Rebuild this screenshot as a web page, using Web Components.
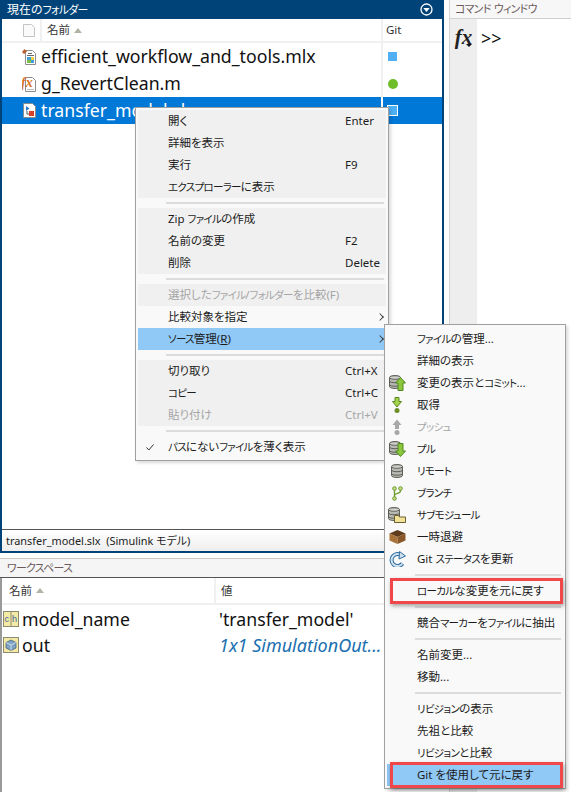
<!DOCTYPE html>
<html lang="ja">
<head>
<meta charset="utf-8">
<title>MATLAB</title>
<style>
html, body { margin: 0; padding: 0; height: 100%; background: #fff; overflow: hidden; }
body { font-family: "Noto Sans", "Noto Sans CJK JP", sans-serif; font-size: 11.5px; font-feature-settings: "palt"; color: #1c1c1c; }
.kana { font-size: 10.5px; letter-spacing: -.7px; }
</style>
</head>
<body>

<app-shell>
    <div slot="left">
        <folder-panel title-text="現在のフォルダー" status="transfer_model.slx  (Simulink モデル)">
            <file-row icon="mlx" git="added">efficient_workflow_and_tools.mlx</file-row>
            <file-row icon="m" git="clean">g_RevertClean.m</file-row>
            <file-row icon="slx" git="added" selected>transfer_model.slx</file-row>
        </folder-panel>
        <workspace-panel>
            <var-row icon="char" value="'transfer_model'">model_name</var-row>
            <var-row icon="cube" value="1x1 SimulationOut..." object>out</var-row>
        </workspace-panel>
    </div>
    <command-panel slot="right"></command-panel>
</app-shell>

<!-- メニュー -->
<context-menu left="135" top="107" width="254">
    <menu-item shade shortcut="Enter">開く</menu-item>
    <menu-item shade>詳細を表示</menu-item>
    <menu-item shade shortcut="F9">実行</menu-item>
    <menu-item shade>エクスプローラーに表示</menu-item>
    <menu-sep></menu-sep>
    <menu-item shade>Zip ファイルの作成</menu-item>
    <menu-item shade shortcut="F2">名前の変更</menu-item>
    <menu-item shade shortcut="Delete">削除</menu-item>
    <menu-sep></menu-sep>
    <menu-item shade disabled>選択したファイル/フォルダーを比較(F)</menu-item>
    <menu-item arrow>比較対象を指定</menu-item>
    <menu-item active arrow>ソース管理(<u>R</u>)</menu-item>
    <menu-sep></menu-sep>
    <menu-item shade shortcut="Ctrl+X">切り取り</menu-item>
    <menu-item shade shortcut="Ctrl+C">コピー</menu-item>
    <menu-item shade disabled shortcut="Ctrl+V">貼り付け</menu-item>
    <menu-sep></menu-sep>
    <menu-item checked>パスにないファイルを薄く表示</menu-item>
</context-menu>

<context-menu left="384" top="324" width="182" sub>
    <menu-item>ファイルの管理...</menu-item>
    <menu-item>詳細の表示</menu-item>
    <menu-item icon="dbup">変更の表示とコミット...</menu-item>
    <menu-item icon="fetch">取得</menu-item>
    <menu-item icon="push" disabled>プッシュ</menu-item>
    <menu-item icon="dbdown">プル</menu-item>
    <menu-item icon="db">リモート</menu-item>
    <menu-item icon="branch">ブランチ</menu-item>
    <menu-item icon="dbfolder">サブモジュール</menu-item>
    <menu-item icon="box">一時退避</menu-item>
    <menu-item icon="refresh">Git ステータスを更新</menu-item>
    <menu-sep></menu-sep>
    <menu-item callout>ローカルな変更を元に戻す</menu-item>
    <menu-sep></menu-sep>
    <menu-item>競合マーカーをファイルに抽出</menu-item>
    <menu-sep></menu-sep>
    <menu-item>名前変更...</menu-item>
    <menu-item>移動...</menu-item>
    <menu-sep></menu-sep>
    <menu-item>リビジョンの表示</menu-item>
    <menu-item>先祖と比較</menu-item>
    <menu-item>リビジョンと比較</menu-item>
    <menu-item active callout>Git を使用して元に戻す</menu-item>
</context-menu>

<script>
//カタカナは元の画面で幅が狭いので、連続部分を span で包む
const kanaStyle = `.kana { font-size: .91em; letter-spacing: -.7px; }`;
const kana = s => s.replace(/[ァ-ヶー]+/g, '<span class="kana">$&</span>');

//データベースの円柱は何度も使うので共通にする
const cyl = (x, y) => `<g transform="translate(${x} ${y})"><path d="M.5 2.500c0-2.600 11-2.600 11 0v9c0 2.600-11 2.600-11 0z" fill="#b9b9b4" stroke="#5e5e58"/><path d="M.5 2.500c0 2.300 11 2.300 11 0" fill="#e4e4e0" stroke="#5e5e58"/><path d="M.5 6c0 2.300 11 2.300 11 0M.5 9.500c0 2.300 11 2.300 11 0" fill="none" stroke="#5e5e58"/></g>`;

//アイコン
const icons = {
    mlx: `<svg width="14" height="16" viewBox="0 0 14 16"><path d="M3.500 1.500h7l3 3v11h-10z" fill="#fff" stroke="#8c8c8c"/><rect x="5" y="8" width="7" height="6" fill="#3f9fd8"/><rect x="5" y="11" width="4" height="3" fill="#7fbf3f"/><rect x="9" y="8" width="3" height="3" fill="#f2d04a"/><path d="M6 4.500h4M5 6.500h7" stroke="#666"/><path d="M0 3l2.500-3 2.500 2.500-3 2.500z" fill="#b8602c"/></svg>`,
    m: `<svg width="14" height="16" viewBox="0 0 14 16"><path d="M3.500 1.500h7l3 3v11h-10z" fill="#fff" stroke="#8c8c8c"/><path d="M5 13.500h7" stroke="#bbb"/><text x="-1" y="11" font-family="Liberation Serif" font-style="italic" font-weight="700" font-size="14" fill="#d9742b">fx</text></svg>`,
    slx: `<svg width="13" height="15" viewBox="0 0 13 15"><path d="M.5.5h9l3 3v11h-12z" fill="#fff" stroke="#8c8c8c"/><rect x="6" y="8" width="5" height="5" fill="#d8402a"/><path d="M3 3v5l3.500-2.500z" fill="#2a78c8"/><path d="M4 8v3h2" fill="none" stroke="#555"/></svg>`,
    doc: `<svg width="12" height="13" viewBox="0 0 12 13"><path d="M.5.5h8l3 3v9h-11z" fill="#fafafa" stroke="#c4c4c4"/></svg>`,
    char: `<svg width="16" height="16" viewBox="0 0 16 16"><rect x=".5" y=".5" width="15" height="15" fill="#f5e9a6" stroke="#8a8a70"/><path d="M8 1v14" stroke="#8a8a70"/><text x="1.500" y="11" font-family="Liberation Sans" font-size="9" fill="#3a5f9a">c</text><text x="9" y="11" font-family="Liberation Sans" font-size="9" fill="#3a5f9a">h</text></svg>`,
    cube: `<svg width="16" height="16" viewBox="0 0 16 16"><rect x=".5" y=".5" width="15" height="15" fill="#f5e9a6" stroke="#8a8a70"/><path d="M8 3l5 2.500v5.500l-5 2.500-5-2.500v-5.500z" fill="#7fa3c4" stroke="#44627f" stroke-width=".8"/><path d="M3 5.500l5 2.500 5-2.500M8 8v5.500" fill="none" stroke="#dfe9f2" stroke-width=".8"/></svg>`,
    db: `<svg width="12" height="14" viewBox="0 0 12 14">${cyl(0, 0)}</svg>`,
    dbup: `<svg width="17" height="16" viewBox="0 0 17 16">${cyl(0, 0)}<path d="M11.500 2.500l5 5.500h-2.500v7.500h-5v-7.500h-2.500z" fill="#8cc63f" stroke="#4d8a1e"/></svg>`,
    dbdown: `<svg width="17" height="16" viewBox="0 0 17 16">${cyl(0, 0)}<path d="M9 2.500h5v7.500h2.500l-5 5.500-5-5.500h2.500z" fill="#8cc63f" stroke="#4d8a1e"/></svg>`,
    fetch: `<svg width="10" height="16" viewBox="0 0 10 16"><path d="M3 .5h4v4h2.500l-4.500 5.500-4.500-5.500h2.500z" fill="#a5d24a" stroke="#55891f"/><circle cx="5" cy="13.500" r="2.500" fill="#6d8f2a"/></svg>`,
    push: `<svg width="10" height="16" viewBox="0 0 10 16"><path d="M5 .5l4.500 5.500h-2.500v4h-4v-4h-2.500z" fill="#a8a8a8"/><circle cx="5" cy="13.500" r="2.500" fill="#a8a8a8"/></svg>`,
    branch: `<svg width="11" height="15" viewBox="0 0 11 15"><path d="M2.500 3v9M8.500 3v2c0 3-6 2-6 4.500" fill="none" stroke="#6d9a2a" stroke-width="1.300"/><circle cx="2.500" cy="2.500" r="1.800" fill="#c6dc8c" stroke="#6d9a2a"/><circle cx="8.500" cy="2.500" r="1.800" fill="#c6dc8c" stroke="#6d9a2a"/><circle cx="2.500" cy="12.500" r="1.800" fill="#c6dc8c" stroke="#6d9a2a"/></svg>`,
    dbfolder: `<svg width="18" height="16" viewBox="0 0 18 16">${cyl(0, 0)}<path d="M6.500 8.500h4l1 1.500h6v5.500h-11z" fill="#f3e39a" stroke="#6b5f2e"/></svg>`,
    box: `<svg width="17" height="14" viewBox="0 0 17 14"><path d="M8.500 0l8 3.500-8 3.500-8-3.500z" fill="#5e3c1c"/><path d="M.5 3.500l8 3.500v7l-8-3.500z" fill="#a87238"/><path d="M16.500 3.500l-8 3.500v7l8-3.500z" fill="#8a5828"/></svg>`,
    refresh: `<svg width="17" height="16" viewBox="0 0 17 16"><path d="M12.500 4.500a6 6 0 1 0 1 8" fill="none" stroke="#2f6c9e" stroke-width="4"/><path d="M12.500 4.500a6 6 0 1 0 1 8" fill="none" stroke="#cfe2f0" stroke-width="2"/><path d="M10.500.5l6 4.500-6.500 3z" fill="#cfe2f0" stroke="#2f6c9e"/></svg>`
};

class AppShell extends HTMLElement {
    constructor() {
        super();
        this.attachShadow({mode: "open"}).innerHTML = `
<style>
:host { display: grid; grid-template-columns: 444px 1fr; column-gap: 5px; height: 792px; width: 571px; background: #fff; }
::slotted([slot=left]) { display: flex; flex-direction: column; row-gap: 5px; height: 792px; }
</style>
<slot name="left"></slot>
<slot name="right"></slot>`;
    }
}

class FolderPanel extends HTMLElement {
    constructor() {
        super();
        this.attachShadow({mode: "open"});
    }
    connectedCallback() {
        this.shadowRoot.innerHTML = `
<style>
${kanaStyle}
:host { display: flex; flex-direction: column; height: 553px; box-sizing: border-box; border: solid #004379; border-width: 0 2px 2px 2px; background: #fff; }
.title { flex: none; height: 19px; margin: 0 -2px; padding: 0 7px; display: flex; align-items: center; justify-content: space-between; background: #004379; color: #fff; font-size: 12px; line-height: 19px; }
.title svg { display: block; margin-right: 4px; }
.head { flex: none; height: 24px; box-sizing: border-box; display: grid; grid-template-columns: 38px 1fr 61px; background: #fff; border-bottom: 2px solid #f0f0f0; line-height: 22px; color: #333; }
.cell { display: flex; align-items: center; }
.cell + .cell { border-left: 2px solid #f0f0f0; padding-left: 5px; column-gap: 4px; }
.cell:last-child { padding-left: 3px; }
.doc { justify-content: flex-end; padding-right: 5px; }
.tri { width: 0; height: 0; border: solid transparent; border-width: 0 4.5px 5px; border-bottom-color: #b4b4a6; }
.rows { flex: 1; min-height: 0; }
.status { flex: none; height: 22px; box-sizing: border-box; border-top: 1px solid #555; padding-left: 4px; background: linear-gradient(#fff, #eeeeee); line-height: 21px; white-space: pre; color: #222; font-size: 10.9px; }
</style>
<div class="title"><span>${kana(this.getAttribute("title-text"))}</span>
<svg width="13" height="13" viewBox="0 0 13 13"><circle cx="6.500" cy="6.500" r="5.500" fill="#004379" stroke="#fff" stroke-width="1.300"/><path d="M3.300 5h6.400l-3.200 4z" fill="#fff"/></svg></div>
<div class="head"><div class="cell doc">${icons.doc}</div><div class="cell"><span>名前</span><i class="tri"></i></div><div class="cell">Git</div></div>
<div class="rows"><slot></slot></div>
<div class="status">${this.getAttribute("status")}</div>`;
    }
}

class FileRow extends HTMLElement {
    constructor() {
        super();
        this.attachShadow({mode: "open"});
    }
    connectedCallback() {
        const git = this.getAttribute("git");
        const mark = git == "clean" ? `<span class="dot"></span>` : `<span class="sq"></span>`;
        this.shadowRoot.innerHTML = `
<style>
:host { display: grid; grid-template-columns: 1fr 61px; height: 27px; font-size: 17.7px; line-height: 27px; color: #111; }
:host([selected]) { background: #0078d7; color: #fff; }
.name { display: flex; align-items: center; padding-left: 20px; column-gap: 5px; white-space: nowrap; overflow: hidden; }
.ic { width: 14px; height: 16px; flex: none; display: flex; align-items: center; justify-content: flex-end; }
.ic svg { display: block; }
.git { border-left: 2px solid #f0f0f0; display: flex; align-items: center; padding-left: 5px; }
.sq { width: 9px; height: 9px; background: #4fb0f5; }
.dot { width: 10px; height: 10px; border-radius: 50%; background: #6ebd29; }
:host([selected]) .git { border-left-color: #fff; }
:host([selected]) .sq { width: 9px; height: 9px; border: 1px solid #fff; margin-left: -1px; }
</style>
<div class="name"><span class="ic">${icons[this.getAttribute("icon")]}</span><span><slot></slot></span></div>
<div class="git">${mark}</div>`;
    }
}

class WorkspacePanel extends HTMLElement {
    constructor() {
        super();
        this.attachShadow({mode: "open"}).innerHTML = `
<style>
${kanaStyle}
:host { display: flex; flex-direction: column; flex: 1; box-sizing: border-box; border-top: 1px solid #c8c8c8; min-height: 0; }
.title { flex: none; height: 18px; padding-left: 7px; background: #f5f5f5; line-height: 18px; color: #6b5a5a; font-size: 12px; border-bottom: 1px solid #555; }
.table { flex: 1; border-left: 2px solid #9a9a9a; background: #fff; }
.head { height: 27px; box-sizing: border-box; display: grid; grid-template-columns: 212px 1fr; border-bottom: 2px solid #f0f0f0; line-height: 25px; color: #333; }
.cell { display: flex; align-items: center; column-gap: 4px; padding-left: 7px; }
.cell + .cell { border-left: 2px solid #f0f0f0; padding-left: 5px; }
.tri { width: 0; height: 0; border: solid transparent; border-width: 0 4.5px 5px; border-bottom-color: #b4b4a6; }
</style>
<div class="title">${kana("ワークスペース")}</div>
<div class="table">
    <div class="head"><div class="cell"><span>名前</span><i class="tri"></i></div><div class="cell">値</div></div>
    <slot></slot>
</div>`;
    }
}

class VarRow extends HTMLElement {
    constructor() {
        super();
        this.attachShadow({mode: "open"});
    }
    connectedCallback() {
        this.shadowRoot.innerHTML = `
<style>
:host { display: grid; grid-template-columns: 212px 1fr; height: 26px; font-size: 17.7px; line-height: 28px; color: #111; }
.name { display: flex; align-items: center; column-gap: 3px; padding-left: 1px; }
.name svg { display: block; }
.val { padding-left: 5px; white-space: nowrap; overflow: hidden; }
:host([object]) .val { font-style: italic; color: #1a6fb0; font-size: 18px; }
</style>
<div class="name">${icons[this.getAttribute("icon")]}<span><slot></slot></span></div>
<div class="val"></div>`;
        this.shadowRoot.querySelector(".val").textContent = this.getAttribute("value");
    }
}

class CommandPanel extends HTMLElement {
    constructor() {
        super();
        this.attachShadow({mode: "open"}).innerHTML = `
<style>
${kanaStyle}
:host { display: flex; flex-direction: column; height: 792px; border-left: 1px solid #d4d4d4; }
.title { flex: none; height: 18px; padding-left: 5px; background: #f7f7f7; border-bottom: 1px solid #d0d0d0; line-height: 18px; color: #6b5a5a; white-space: nowrap; overflow: hidden; font-size: 12px; }
.body { flex: 1; display: grid; grid-template-columns: 27px 1fr; }
.fx { background: #eeeeee; position: relative; text-align: center; font: italic 700 21px/37px "Liberation Serif", serif; color: #222; }
.fx i { position: absolute; left: 16px; top: 25px; border: solid transparent; border-width: 3px 3px 0; border-top-color: #111; }
.prompt { font: 18px/38px "Noto Sans", sans-serif; padding-left: 4px; color: #111; }
</style>
<div class="title">${kana("コマンド ウィンドウ")}</div>
<div class="body"><div class="fx">fx<i></i></div><div class="prompt">&gt;&gt;</div></div>`;
    }
}

class ContextMenu extends HTMLElement {
    constructor() {
        super();
        this.attachShadow({mode: "open"}).innerHTML = `
<style>
:host { display: block; position: absolute; box-sizing: border-box; padding: 2px; background: #f9f9f9; border: 1px solid #a0a0a0; box-shadow: 2px 2px 3px rgba(0,0,0,.15); }
:host([sub]) { padding-top: 3px; --lead-pad: 10px; }
</style>
<slot></slot>`;
    }
    connectedCallback() {
        this.style.left = this.getAttribute("left") + "px";
        this.style.top = this.getAttribute("top") + "px";
        this.style.width = this.getAttribute("width") + "px";
    }
}

class MenuItem extends HTMLElement {
    constructor() {
        super();
        this.attachShadow({mode: "open"});
    }
    connectedCallback() {
        const ic = this.getAttribute("icon");
        const key = this.getAttribute("shortcut");
        this.innerHTML = kana(this.innerHTML);
        this.shadowRoot.innerHTML = `
<style>
:host { display: flex; position: relative; height: 22px; align-items: center; line-height: 22px; color: #1c1c1c; white-space: nowrap; }
:host([shade]) { background: #f0f0f0; }
:host([disabled]) { color: #a6a6a6; }
:host([active]) { background: #90c8f6; }
.lead { flex: none; width: 30px; display: flex; align-items: center; justify-content: center; box-sizing: border-box; padding-right: var(--lead-pad, 6px); }
.lead svg { display: block; }
.text { flex: 1; }
.key { flex: none; width: 41px; }
.arrow { position: absolute; right: 3px; top: 8px; width: 5px; height: 5px; border: solid #333; border-width: 1px 1px 0 0; transform: rotate(45deg) scale(.9); }
.callout { position: absolute; left: 3px; right: 0; top: -2px; bottom: -2px; border: 3px solid #f0474b; box-shadow: 1px 2px 4px rgba(0,0,0,.35); }
</style>
<span class="lead">${ic ? icons[ic] : ""}${this.hasAttribute("checked") ? '<svg width="8" height="7" viewBox="0 0 8 7"><path d="M.5 3.500l2.300 2.500 4.700-5.500" fill="none" stroke="#333"/></svg>' : ""}</span>
<span class="text"><slot></slot></span>
${key ? `<span class="key">${key}</span>` : ""}
${this.hasAttribute("arrow") ? '<i class="arrow"></i>' : ""}
${this.hasAttribute("callout") ? '<i class="callout"></i>' : ""}`;
    }
}

class MenuSep extends HTMLElement {
    constructor() {
        super();
        this.attachShadow({mode: "open"}).innerHTML = `
<style>
:host { display: block; height: 10px; box-sizing: border-box; padding: 4px 2px 0 28px; }
div { height: 2px; background: #dcdcdc; }
</style>
<div></div>`;
    }
}

customElements.define("app-shell", AppShell);
customElements.define("folder-panel", FolderPanel);
customElements.define("file-row", FileRow);
customElements.define("workspace-panel", WorkspacePanel);
customElements.define("var-row", VarRow);
customElements.define("command-panel", CommandPanel);
customElements.define("context-menu", ContextMenu);
customElements.define("menu-item", MenuItem);
customElements.define("menu-sep", MenuSep);
</script>
</body>
</html>
